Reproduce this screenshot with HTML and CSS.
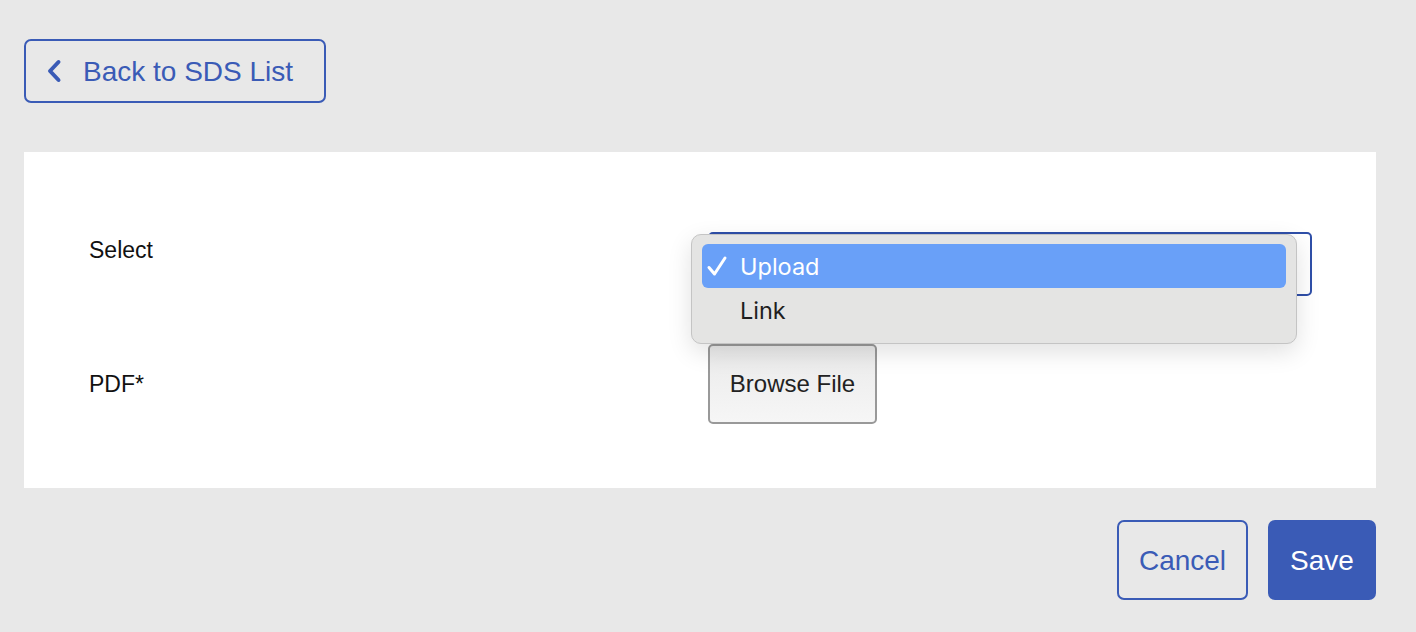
FILE: index.html
```html
<!DOCTYPE html>
<html lang="en">
<head>
    <meta charset="UTF-8">
    <meta name="viewport" content="width=device-width, initial-scale=1.0">
    <title>SDS Upload</title>
    <link rel="stylesheet" href="styles.css">
</head>
<body>
    <div class="page">
        <div class="top-bar">
            <button type="button" class="btn btn-back">
                <svg class="chevron" width="16" height="24" viewBox="0 0 16 24">
                    <path d="M12.5 3 L4 12 L12.5 21" fill="none" stroke="currentColor" stroke-width="4" stroke-linecap="round" stroke-linejoin="round"/>
                </svg>
                <span>Back to SDS List</span>
            </button>
        </div>

        <div class="card">
            <div class="form-row">
                <label class="form-label label-select">Select</label>
                <div class="form-control">
                    <div class="select-wrap">
                        <div class="select-box"></div>
                        <ul class="dropdown-menu">
                            <li class="option selected">
                                <svg class="check" width="22" height="22" viewBox="0 0 22 22">
                                    <path d="M3 12.5 L8.5 19 L19 3" fill="none" stroke="currentColor" stroke-width="3" stroke-linecap="round" stroke-linejoin="round"/>
                                </svg>
                                Upload
                            </li>
                            <li class="option"><span class="check-space"></span>Link</li>
                        </ul>
                    </div>
                </div>
            </div>
            <div class="form-row row-pdf">
                <label class="form-label">PDF*</label>
                <div class="form-control">
                    <button type="button" class="btn-browse">Browse File</button>
                </div>
            </div>
        </div>

        <div class="actions">
            <button type="button" class="btn btn-outline">Cancel</button>
            <button type="button" class="btn btn-primary">Save</button>
        </div>
    </div>
</body>
</html>
```

FILE: styles.css
```css
body {
    margin: 0;
    padding: 0;
    background-color: #e8e8e8;
    font-family: 'Liberation Sans', Arial, sans-serif;
    color: #222;
}
.page {
    padding: 39px 40px 32px 24px;
}
.top-bar {
    margin-bottom: 49px;
}
.btn {
    font-family: 'Liberation Sans', Arial, sans-serif;
    font-size: 28px;
    border-radius: 7px;
    cursor: pointer;
    box-sizing: border-box;
}
.btn-back {
    display: flex;
    align-items: center;
    height: 64px;
    width: 302px;
    padding: 2px 0 0 20px;
    background: transparent;
    border: 2px solid #3a5bb6;
    color: #3a5bb6;
}
.btn-back .chevron {
    margin-right: 21px;
    margin-top: -2px;
}
.card {
    background-color: #fff;
    padding: 80px 64px 64px 64px;
}
.form-row {
    display: grid;
    grid-template-columns: 1fr 1fr;
}
.row-pdf {
    margin-top: 48px;
    align-items: center;
}
.form-label {
    font-size: 23px;
    color: #111;
    padding-left: 1px;
}
.label-select {
    padding-top: 5px;
}
.form-control {
    padding-left: 8px;
}
.select-wrap {
    position: relative;
}
.select-box {
    height: 64px;
    box-sizing: border-box;
    border: 2px solid #2f4fa8;
    border-radius: 5px;
}
.dropdown-menu {
    position: absolute;
    top: 2px;
    left: -17px;
    width: 606px;
    box-sizing: border-box;
    margin: 0;
    padding: 9px 10px 11px 10px;
    list-style: none;
    background-color: #e4e4e3;
    border: 1px solid #c4c4c4;
    border-radius: 10px;
    box-shadow: 0 8px 24px rgba(0, 0, 0, 0.12);
    font-family: Inter, 'Noto Sans', sans-serif;
    font-size: 23.5px;
}
.option {
    display: flex;
    align-items: center;
    height: 44px;
    border-radius: 6px;
    color: #1e1e1e;
}
.option .check {
    margin-left: 4px;
    margin-right: 12px;
}
.option .check-space {
    display: inline-block;
    width: 38px;
}
.option.selected {
    background-color: #69a0f8;
    color: #fff;
}
.btn-browse {
    height: 80px;
    width: 169px;
    font-family: 'Liberation Sans', Arial, sans-serif;
    font-size: 24px;
    color: #222;
    background: linear-gradient(#eaeaea, #f6f6f6);
    border: 2px solid #999;
    border-radius: 5px;
}
.actions {
    display: flex;
    justify-content: flex-end;
    gap: 20px;
    margin-top: 32px;
}
.btn-outline {
    height: 80px;
    width: 131px;
    padding-top: 2px;
    background: transparent;
    border: 2px solid #3a5bb6;
    color: #3a5bb6;
}
.btn-primary {
    height: 80px;
    width: 108px;
    padding-top: 2px;
    background-color: #3a5bb6;
    border: none;
    color: #fff;
}
```
